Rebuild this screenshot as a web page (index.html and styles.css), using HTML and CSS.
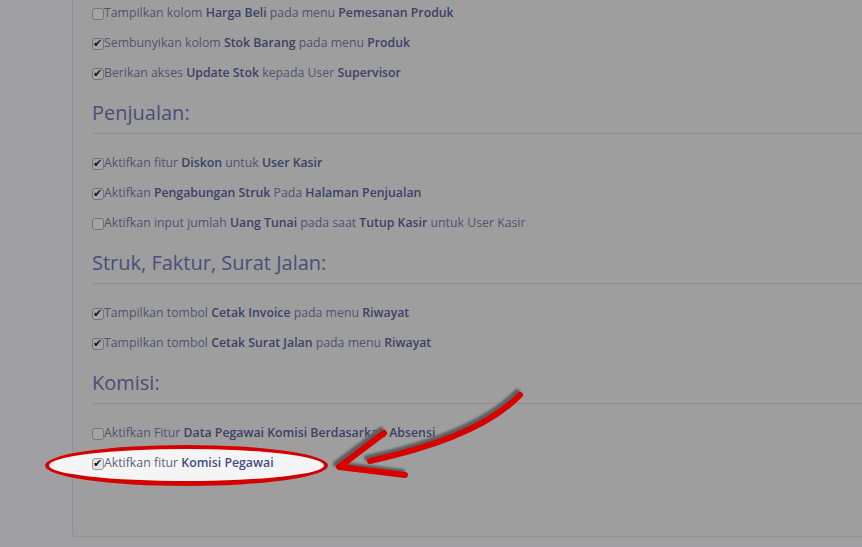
FILE: index.html
```html
<!DOCTYPE html>
<html lang="id">
<head>
  <meta charset="UTF-8">
  <meta name="viewport" content="width=device-width, initial-scale=1">
  <title>Pengaturan Toko</title>
  <link rel="stylesheet" href="styles.css">
</head>
<body>
  <div class="panel">
    <div class="option"><span class="check"></span>Tampilkan kolom <b>Harga Beli</b> pada menu <b>Pemesanan Produk</b></div>
    <div class="option"><span class="check on"></span>Sembunyikan kolom <b>Stok Barang</b> pada menu <b>Produk</b></div>
    <div class="option"><span class="check on"></span>Berikan akses <b>Update Stok</b> kepada User <b>Supervisor</b></div>

    <h4>Penjualan:</h4>
    <div class="option"><span class="check on"></span>Aktifkan fitur <b>Diskon</b> untuk <b>User Kasir</b></div>
    <div class="option"><span class="check on"></span>Aktifkan <b>Pengabungan Struk</b> Pada <b>Halaman Penjualan</b></div>
    <div class="option"><span class="check"></span>Aktifkan input jumlah <b>Uang Tunai</b> pada saat <b>Tutup Kasir</b> untuk User Kasir</div>

    <h4>Struk, Faktur, Surat Jalan:</h4>
    <div class="option"><span class="check on"></span>Tampilkan tombol <b>Cetak Invoice</b> pada menu <b>Riwayat</b></div>
    <div class="option"><span class="check on"></span>Tampilkan tombol <b>Cetak Surat Jalan</b> pada menu <b>Riwayat</b></div>

    <h4>Komisi:</h4>
    <div class="option"><span class="check"></span>Aktifkan Fitur <b>Data Pegawai Komisi Berdasarkan Absensi</b></div>
    <div class="option highlight"><span class="check on"></span>Aktifkan fitur <b>Komisi Pegawai</b></div>
  </div>

  <!-- panah anotasi -->
  <svg class="arrow" width="862" height="547" viewBox="0 0 862 547">
    <defs>
      <filter id="blur"><feGaussianBlur stdDeviation="1.2"/></filter>
    </defs>
    <g fill="none" stroke-linecap="round" stroke-linejoin="round">
      <g stroke="#5e5e5e" stroke-width="6" filter="url(#blur)" transform="translate(-3,-3)">
        <path d="M520 395 C 492 424, 440 446, 370 461"/>
        <path d="M384 433 L 339 467 L 405 475"/>
      </g>
      <g stroke="#d90000" stroke-width="6">
        <path d="M520 395 C 492 424, 440 446, 370 461"/>
        <path d="M384 433 L 339 467 L 405 475"/>
      </g>
    </g>
  </svg>
</body>
</html>
```

FILE: styles.css
```css
body {
  margin: 0;
  font-family: 'Open Sans', sans-serif;
  font-size: 12.3px;
  background-color: #a0a0a4;
  color: #50546f;
  overflow: hidden;
}

.panel {
  margin: -10px 0 0 72px;
  padding: 7px 0 58px 19px;
  background-color: #9e9e9e;
  border: 1px solid #929292;
  border-right: none;
  border-radius: 4px 0 0 4px;
}

.option {
  height: 30px;
  line-height: 30px;
  white-space: nowrap;
}

.option b {
  font-weight: 600;
  color: #3d4168;
}

.check {
  display: inline-block;
  width: 10px;
  height: 10px;
  vertical-align: -3px;
  border: 1px solid #747474;
  border-radius: 3px;
  background-color: #a4a4a4;
  position: relative;
}

.check.on::after {
  content: "\2714";
  position: absolute;
  left: 0;
  top: -10px;
  font-family: 'DejaVu Sans', sans-serif;
  font-size: 11px;
  color: #1a1a1a;
}

h4 {
  margin: 14px 0 14px;
  padding-bottom: 9px;
  border-bottom: 1px solid #8f8f8f;
  font-size: 20px;
  font-weight: 400;
  line-height: 22px;
  color: #4a4e78;
}

.highlight {
  position: relative;
  z-index: 0;
  color: #5d6180;
}

.highlight b {
  color: #434b84;
}

.highlight::before {
  content: "";
  position: absolute;
  z-index: -1;
  left: -47px;
  top: -3px;
  width: 283px;
  height: 41px;
  box-sizing: border-box;
  border: 4px solid #d60000;
  border-bottom-width: 5px;
  border-radius: 50%;
  background-color: #f5f5f5;
}

.highlight .check {
  background-color: #e6e6e6;
  border-color: #9a9a9a;
}

.arrow {
  position: absolute;
  left: 0;
  top: 0;
  pointer-events: none;
}
```
